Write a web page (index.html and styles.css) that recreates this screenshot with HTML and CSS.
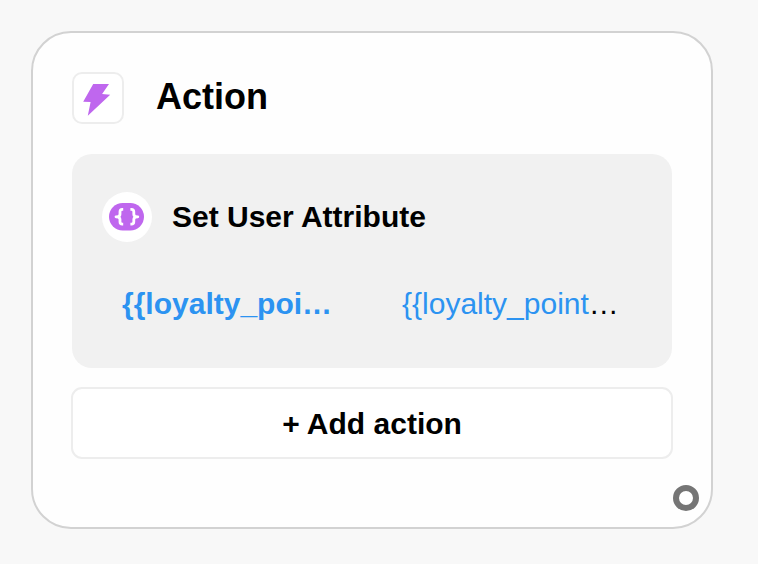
FILE: index.html
```html
<!DOCTYPE html>
<html lang="en">
<head>
  <meta charset="utf-8">
  <title>Action</title>
  <meta name="viewport" content="width=device-width, initial-scale=1">
  <link rel="stylesheet" href="styles.css">
</head>
<body>
<div class="card">
  <div class="card-header">
    <div class="card-icon">
      <svg width="28" height="34" viewBox="0 0 28 34">
        <path d="M10.2 1H26L19.1 11L27.2 11.8L4.8 32.8L7.6 19L0.2 18.8Z" fill="#bf67ee"/>
      </svg>
    </div>
    <h2>Action</h2>
  </div>

  <div class="panel">
    <div class="panel-header">
      <div class="panel-icon">
        <svg width="36" height="28" viewBox="0 0 36 28">
          <rect x="0" y="0" width="35" height="27.4" rx="13.7" fill="#bf67ee"/>
          <g fill="none" stroke="#fff" stroke-width="2.8" stroke-linejoin="round">
            <path d="M14.2 6.4H13.2Q11 6.4 11 8.8V11.2Q11 13.8 7 13.8Q11 13.8 11 16.4V18.8Q11 21.2 13.2 21.2H14.2"/>
            <path d="M21.4 6.4H22.4Q24.8 6.4 24.8 8.8V11.2Q24.8 13.8 28.8 13.8Q24.8 13.8 24.8 16.4V18.8Q24.8 21.2 22.4 21.2H21.4"/>
          </g>
        </svg>
      </div>
      <h3>Set User Attribute</h3>
    </div>
    <div class="attribute">
      <div class="attr-name">{{loyalty_points}}</div>
      <div class="attr-value"><span>{{loyalty_points}}</span></div>
    </div>
  </div>

  <button class="add-btn">+ Add action</button>
  <div class="connector"></div>
</div>
</body>
</html>
```

FILE: styles.css
```css
* { box-sizing: border-box; }

body {
  margin: 0;
  padding: 31px;
  background: #f8f8f8;
  color: #000;
  font-family: "Liberation Sans", Arial, sans-serif;
}

h2, h3 { margin: 0; font-weight: bold; }

.card {
  position: relative;
  width: 682px;
  height: 498px;
  padding: 39px;
  border: 2px solid #d2d2d2;
  border-radius: 40px;
  background: #fefefe;
}

.card-header {
  display: flex;
  align-items: center;
  gap: 32px;
  height: 52px;
  margin-bottom: 30px;
}

.card-header h2 { font-size: 36px; line-height: 42px; margin-bottom: 2px; }

.card-icon {
  display: flex;
  align-items: center;
  justify-content: center;
  width: 52px;
  height: 52px;
  border: 2px solid #ededed;
  border-radius: 10px;
  background: #fff;
  padding-top: 3px;
  padding-right: 2px;
}

.panel {
  height: 214px;
  padding: 38px 30px;
  border-radius: 20px;
  background: #f1f1f1;
}

.panel-header { display: flex; align-items: center; gap: 20px; }

.panel-header h3 { font-size: 30px; line-height: 34px; }

.panel-icon {
  display: flex;
  align-items: center;
  justify-content: center;
  width: 50px;
  height: 50px;
  border-radius: 50%;
  background: #fff;
}

.attribute {
  display: grid;
  grid-template-columns: 220px 220px;
  gap: 60px;
  margin-top: 44px;
  padding-left: 20px;
  font-size: 30px;
  line-height: 36px;
}

.attr-name, .attr-value {
  overflow: hidden;
  white-space: nowrap;
  text-overflow: ellipsis;
}

.attr-name { color: #2c93f1; font-weight: bold; }
.attr-value span { color: #2c93f1; }

.add-btn {
  display: block;
  width: 602px;
  height: 72px;
  margin: 19px -1px 0;
  padding: 2px 0 0;
  border: 2px solid #ededed;
  border-radius: 11px;
  background: #fff;
  color: #000;
  font-family: inherit;
  font-size: 30px;
  font-weight: bold;
  cursor: pointer;
}

.connector {
  position: absolute;
  right: 12px;
  bottom: 16px;
  width: 26px;
  height: 26px;
  border: 6px solid #757575;
  border-radius: 50%;
  background: #fff;
}
```
